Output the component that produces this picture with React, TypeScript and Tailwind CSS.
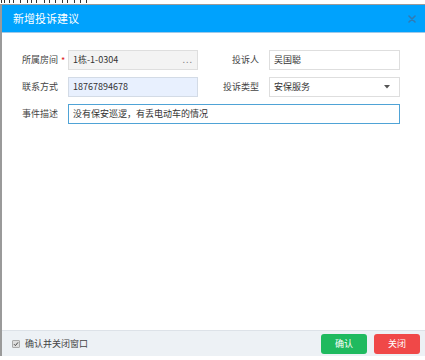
const font = { fontFamily: '"Noto Sans CJK SC", "Noto Sans", sans-serif' };

const marks = [1, 4, 9, 13, 20, 27, 31, 36, 44, 49, 55, 62, 67, 74, 80, 86];

function Label({ text, star, className = "" }: { text: string; star?: boolean; className?: string }) {
  return (
    <div className={`flex items-center justify-end text-[9px] text-[#444] ${className}`}>
      <span>{text}</span>
      {star !== undefined && (
        <span className={`w-[10px] pl-[3px] text-[9px] leading-none ${star ? "text-[#e02020]" : "text-transparent"}`}>*</span>
      )}
    </div>
  );
}

export default function App() {
  return (
    <div className="w-[425px] h-[360px] bg-white overflow-hidden" style={font}>
      {/* bottom edge of the page behind the dialog */}
      <div className="relative h-[4px]">
        {marks.map((x) => (
          <span key={x} className="absolute top-0 h-[3px] w-[1px] bg-[#333]" style={{ left: x }} />
        ))}
      </div>

      <div className="flex flex-col h-[352px] border-l-2 border-t border-[#9a9a9a]">
        <div className="flex h-[28px] shrink-0 items-center justify-between border-b border-[#9fc9e8] bg-[#00a2fd] pl-[11px] pr-[9px]">
          <span className="text-[11px] text-white">新增投诉建议</span>
          <svg width="8" height="8" viewBox="0 0 8 8" className="mt-[1px]">
            <path d="M1 1 7 7M7 1 1 7" stroke="#2f7bb5" strokeWidth="1.6" strokeLinecap="round" />
          </svg>
        </div>

        <div className="flex-1 pt-[17px]">
          <div className="grid grid-cols-[66px_130px_71px_131px] auto-rows-[20px] gap-y-[7px] text-[9px]">
            <Label text="所属房间" star />
            <div className="flex items-center justify-between border border-[#dedede] bg-[#f3f3f3] pl-[4px] pr-[4px] text-[#333]">
              <span>1栋-1-0304</span>
              <span className="tracking-[1px] text-[#888]">...</span>
            </div>
            <Label text="投诉人" className="pr-[10px]" />
            <div className="flex items-center border border-[#dedede] bg-white pl-[4px] text-[#333]">吴国聪</div>

            <Label text="联系方式" star={false} />
            <div className="flex items-center border border-[#d3dbe6] bg-[#e8f0fe] pl-[4px] text-[#333]">18767894678</div>
            <Label text="投诉类型" className="pr-[10px]" />
            <div className="flex items-center justify-between border border-[#dedede] bg-white pl-[4px] pr-[9px] text-[#333]">
              <span>安保服务</span>
              <svg width="6" height="4" viewBox="0 0 6 4">
                <path d="M0 0h6L3 3.5z" fill="#555" />
              </svg>
            </div>

            <Label text="事件描述" star={false} />
            <div className="col-span-3 flex items-center border border-[#4fa3d6] bg-white pl-[4px] text-[#333]">
              没有保安巡逻，有丢电动车的情况
            </div>
          </div>
        </div>

        <div className="flex h-[26px] shrink-0 items-center justify-between border-t border-[#dde2e8] bg-[#edf1f5] pl-[10px] pr-[5px]">
          <label className="flex items-center gap-[5px] text-[9px] text-[#444]">
            <span className="flex h-[8px] w-[8px] items-center justify-center rounded-[1px] border border-[#aaa] bg-[#ddd]">
              <svg width="6" height="6" viewBox="0 0 6 6">
                <path d="M1 3.2 2.4 4.6 5 1.4" stroke="#444" strokeWidth="1" fill="none" />
              </svg>
            </span>
            确认并关闭窗口
          </label>
          <div className="flex gap-[7px]">
            <button className="h-[20px] w-[46px] rounded-[3px] bg-[#1fba5f] text-[9px] text-white">确认</button>
            <button className="h-[20px] w-[46px] rounded-[3px] bg-[#f04848] text-[9px] text-white">关闭</button>
          </div>
        </div>
      </div>
    </div>
  );
}
